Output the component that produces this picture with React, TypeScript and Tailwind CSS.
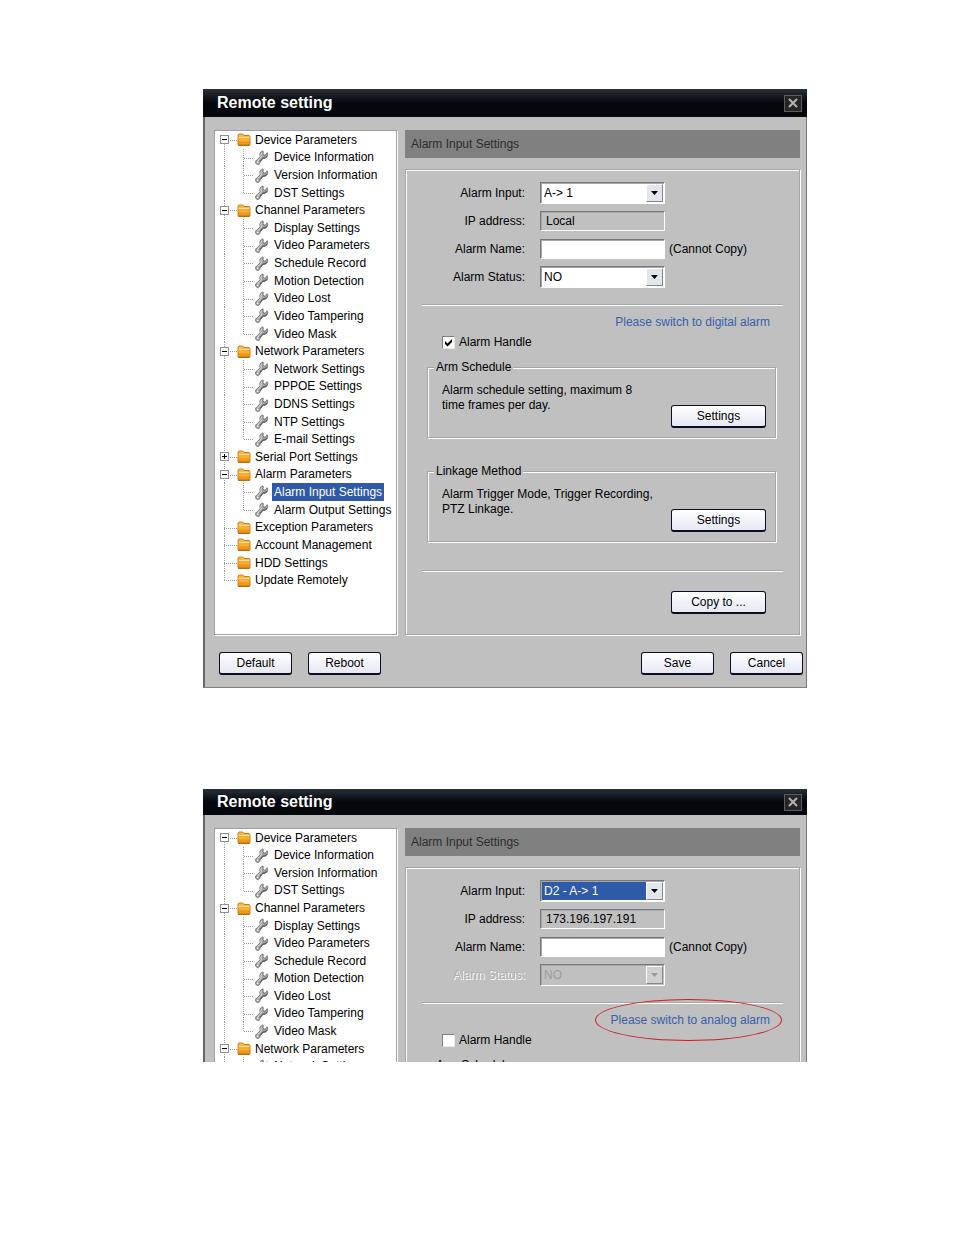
import clsx from 'clsx';
import { FC, ReactNode, useId } from 'react';

type TreeGroup = {
	name: string;
	open?: boolean;
	expandable?: boolean;
	children?: string[];
};

type RemoteSettingProps = {
	preview?: boolean;
	groups: TreeGroup[];
	selected?: string;
	alarmInput: string;
	highlightInput?: boolean;
	ipAddress: string;
	statusDisabled?: boolean;
	switchText: string;
	circled?: boolean;
	handled: boolean;
};

const deviceGroup: TreeGroup = {
	name: 'Device Parameters',
	expandable: true,
	open: true,
	children: ['Device Information', 'Version Information', 'DST Settings'],
};

const channelGroup: TreeGroup = {
	name: 'Channel Parameters',
	expandable: true,
	open: true,
	children: [
		'Display Settings',
		'Video Parameters',
		'Schedule Record',
		'Motion Detection',
		'Video Lost',
		'Video Tampering',
		'Video Mask',
	],
};

const allGroups: TreeGroup[] = [
	deviceGroup,
	channelGroup,
	{
		name: 'Network Parameters',
		expandable: true,
		open: true,
		children: ['Network Settings', 'PPPOE Settings', 'DDNS Settings', 'NTP Settings', 'E-mail Settings'],
	},
	{ name: 'Serial Port Settings', expandable: true },
	{
		name: 'Alarm Parameters',
		expandable: true,
		open: true,
		children: ['Alarm Input Settings', 'Alarm Output Settings'],
	},
	{ name: 'Exception Parameters' },
	{ name: 'Account Management' },
	{ name: 'HDD Settings' },
	{ name: 'Update Remotely' },
];

const previewGroups: TreeGroup[] = [
	deviceGroup,
	channelGroup,
	{ name: 'Network Parameters', expandable: true, open: true, children: ['Network Settings'] },
];

const FolderIcon: FC = () => (
	<svg viewBox="0 0 14 13" className="w-[14px] h-[13px] shrink-0" aria-hidden="true">
		<path d="M1 11.600V2l.9-1h4l1.200 1.500h5l.9.8v8.300l-.6.8H1.600z" fill="#f0981a" stroke="#c4740e" strokeWidth=".9" />
		<path d="M1.600 4V2.200l.6-.6h3.500l1.200 1.500h5.500V4z" fill="#f8b84a" />
		<path d="M1.500 4.600h11" stroke="#ffe29a" strokeWidth="1.200" />
		<path d="M1.600 5.400h10.800v3H1.600z" fill="#fbb034" />
		<path d="M1.200 12.200h11.400" stroke="#a85e08" strokeWidth=".9" />
	</svg>
);

const WrenchIcon: FC = () => (
	<svg viewBox="0 0 14 15" className="w-[14px] h-[15px] shrink-0" aria-hidden="true">
		<path
			d="M8 .9 5.600 2.200 4.800 4.400l.3 2.200L2.300 9.800l-1.500 1-.3 1.800.9 1.500 1.700.4 1.600-.9.6-1.800L8 8.500l2.200-.2 1.900-1.400.7-2.300-.7-1.900-1.500 2.200-1.600.2-1-1.200.3-1.700z"
			fill="#a2a2a2"
			stroke="#6a6a6a"
			strokeWidth=".8"
			strokeLinejoin="round"
		/>
		<path d="M6.700 2.600 5.900 4.500l.4 2.500-3.900 4.200" fill="none" stroke="#dedede" strokeWidth="1" />
		<path d="M4.900 11.600 7.700 8.100l2.400-.4 1.700-1.400" fill="none" stroke="#4a4a4a" strokeWidth=".9" />
		<circle cx="2.700" cy="12.400" r=".8" fill="#f4f4f4" />
	</svg>
);

const dots = { stroke: '#9a9a9a', strokeDasharray: '1 1' };

const RootLines: FC<{ first?: boolean; last?: boolean; branch?: boolean }> = ({ first, last, branch }) => (
	<svg className="col-start-1 row-start-1 w-[22px] h-full" aria-hidden="true">
		<line x1="9.5" x2="9.5" y1={first ? '50%' : '0'} y2={last ? '50%' : '100%'} {...dots} />
		{branch && <line x1="9" x2="22" y1="9.5" y2="9.5" {...dots} />}
	</svg>
);

const TreeLabel: FC<{ selected?: boolean; children: ReactNode }> = ({ selected, children }) => (
	<button
		type="button"
		className={clsx('ml-0.5 px-0.5 h-full flex items-center whitespace-nowrap', selected && 'bg-[#2f5aa8] text-white')}
	>
		{children}
	</button>
);

const Tree: FC<{ groups: TreeGroup[]; selected?: string; preview?: boolean }> = ({ groups, selected, preview }) => (
	<ul className={clsx('grid auto-rows-fr', preview ? 'h-[246px]' : 'h-[458px]')}>
		{groups.flatMap((group, i) => [
			<li key={group.name} className="flex items-center min-h-0">
				<span className="grid h-full items-center">
					<RootLines first={i === 0} last={!preview && i === groups.length - 1} branch />
					{group.expandable && (
						<button
							type="button"
							aria-label={group.open ? 'Collapse' : 'Expand'}
							className="col-start-1 row-start-1 ml-[5px] z-10 w-[9px] h-[9px] border border-[#8a9199] bg-white"
						>
							<svg viewBox="0 0 7 7" className="w-[7px] h-[7px]">
								<path d={group.open ? 'M1 3.5h5' : 'M1 3.5h5M3.5 1v5'} stroke="#000" />
							</svg>
						</button>
					)}
				</span>
				<FolderIcon />
				<TreeLabel>{group.name}</TreeLabel>
			</li>,
			...(group.children ?? []).map((child, j, all) => (
				<li key={child} className="flex items-center min-h-0">
					<span className="grid h-full">
						<RootLines />
					</span>
					<svg className="w-[18px] h-full shrink-0" aria-hidden="true">
						<line x1="6.5" x2="6.5" y1="0" y2={j === all.length - 1 ? '50%' : '100%'} {...dots} />
						<line x1="7" x2="17" y1="9.5" y2="9.5" {...dots} />
					</svg>
					<WrenchIcon />
					<span className="w-px" />
					<TreeLabel selected={child === selected}>{child}</TreeLabel>
				</li>
			)),
		])}
	</ul>
);

const PushButton: FC<{ wide?: boolean; children: ReactNode }> = ({ wide, children }) => (
	<button
		type="button"
		className={clsx(
			'h-[23px] shrink-0 rounded-[3px] border border-b-2 border-[#0a0e20] bg-linear-to-b from-white to-[#e6e8f4]',
			wide ? 'w-[95px]' : 'w-[73px]'
		)}
	>
		{children}
	</button>
);

const Divider: FC = () => <hr className="h-0.5 border-t border-b border-t-[#a6a6a6] border-b-white" />;

const FormRow: FC<{ id: string; label: string; disabled?: boolean; children: ReactNode }> = ({
	id,
	label,
	disabled,
	children,
}) => (
	<div className="flex items-center h-[22px]">
		<label
			htmlFor={id}
			className={clsx('w-[103px] mr-[15px] text-right', disabled && 'text-[#b0b0b0] [text-shadow:1px_1px_0_#fff]')}
		>
			{label}
		</label>
		{children}
	</div>
);

const fieldClass =
	'w-[125px] border border-t-[#777] border-l-[#777] border-r-white border-b-white shadow-[inset_1px_1px_0_#a8a8a8]';

const SelectBox: FC<{ id: string; value: string; highlight?: boolean; disabled?: boolean }> = ({
	id,
	value,
	highlight,
	disabled,
}) => (
	<div className={clsx(fieldClass, 'grid items-center h-[22px] p-px', disabled ? 'bg-[#c0c0c0]' : 'bg-white')}>
		<select
			id={id}
			disabled={disabled}
			className={clsx(
				'col-start-1 row-start-1 appearance-none w-full h-full pl-0.5 opacity-100 outline-none',
				highlight && 'bg-[#2f5aa8] text-white',
				disabled && 'text-[#9c9c9c]'
			)}
		>
			<option>{value}</option>
		</select>
		<span
			className={clsx(
				'col-start-1 row-start-1 justify-self-end pointer-events-none flex items-center justify-center w-[17px] h-full border border-t-white border-l-white border-r-[#858585] border-b-[#858585]',
				disabled ? 'bg-[#d0d0d0]' : 'bg-[#e4e6ee]'
			)}
		>
			<svg viewBox="0 0 7 4" className="w-[7px] h-[4px]">
				<path d="M0 0h7L3.5 4z" fill={disabled ? '#999' : '#000'} />
			</svg>
		</span>
	</div>
);

const Group: FC<{ title: string; className: string; children?: ReactNode }> = ({ title, className, children }) => (
	<fieldset
		className={clsx(
			'ml-[5px] mr-[7px] h-[78px] pl-3.5 pr-[9px] border border-[#a6a6a6] shadow-[1px_1px_0_#fff,inset_1px_1px_0_#fff]',
			className
		)}
	>
		<legend className="-ml-2 px-0.5 bg-[#c0c0c0] leading-[14px]">{title}</legend>
		{children && (
			<div className="flex items-end justify-between pt-[9px]">
				<p className="w-[216px] h-[45px] leading-[15px]">{children}</p>
				<PushButton wide>Settings</PushButton>
			</div>
		)}
	</fieldset>
);

const RemoteSetting: FC<RemoteSettingProps> = ({
	preview,
	groups,
	selected,
	alarmInput,
	highlightInput,
	ipAddress,
	statusDisabled,
	switchText,
	circled,
	handled,
}) => {
	const id = useId();

	return (
		<section className="bg-[#c0c0c0]">
			<header
				className={clsx(
					'flex items-center justify-between pl-3.5 pr-[5px] bg-linear-to-b from-[#2b313a] via-[#05070b] to-[#05080d]',
					preview ? 'h-[26px]' : 'h-7'
				)}
			>
				<h2 className="text-base leading-5 font-bold text-white">Remote setting</h2>
				<button
					type="button"
					aria-label="Close"
					className="flex items-center justify-center w-[18px] h-[17px] border border-[#5c5c5c] bg-[#262626]"
				>
					<svg viewBox="0 0 10 10" className="w-[10px] h-[10px]">
						<path d="M1 1l8 8M9 1L1 9" stroke="#b4b4b4" strokeWidth="2" />
					</svg>
				</button>
			</header>
			<div className="border-l-2 border-r border-b border-l-[#666] border-r-[#777] border-b-[#808080]">
				<div className="flex gap-2 pt-[13px] pl-[9px] pr-1.5">
					<nav className="w-[183px] shrink-0 border border-[#a0a0a0] bg-white shadow-[1px_1px_0_#fff]">
						<Tree groups={groups} selected={selected} preview={preview} />
					</nav>
					<div className="flex-1 min-w-0">
						<h3 className="h-7 pl-1.5 flex items-center bg-[#808080] text-[#2c2c2c]">Alarm Input Settings</h3>
						<form className="mt-[11px] pt-3 px-4 pb-5 border border-[#a6a6a6] shadow-[1px_1px_0_#fff,inset_1px_1px_0_#fff]">
							<div className="flex flex-col gap-1.5 mb-4">
								<FormRow id={`${id}-input`} label="Alarm Input:">
									<SelectBox id={`${id}-input`} value={alarmInput} highlight={highlightInput} />
								</FormRow>
								<FormRow id={`${id}-ip`} label="IP address:">
									<input id={`${id}-ip`} readOnly defaultValue={ipAddress} className={clsx(fieldClass, 'h-5 pl-[5px]')} />
								</FormRow>
								<FormRow id={`${id}-name`} label="Alarm Name:">
									<input id={`${id}-name`} className={clsx(fieldClass, 'h-5 px-1 bg-white')} />
									<span className="ml-1">(Cannot Copy)</span>
								</FormRow>
								<FormRow id={`${id}-status`} label="Alarm Status:" disabled={statusDisabled}>
									<SelectBox id={`${id}-status`} value="NO" disabled={statusDisabled} />
								</FormRow>
							</div>
							<Divider />
							<div className="flex justify-end mt-2 pr-[13px]">
								<a href="#" className="relative h-4 text-[#3560ac]">
									{switchText}
									{circled && (
										<span className="absolute -inset-y-[13px] -left-4 -right-3 rounded-[50%] border border-[#c8201c]" />
									)}
								</a>
							</div>
							<div className="flex items-center mt-1 ml-5 h-4">
								<span className="grid items-center">
									<input
										id={`${id}-handle`}
										type="checkbox"
										defaultChecked={handled}
										className="peer col-start-1 row-start-1 appearance-none w-[13px] h-[13px] bg-white border border-t-[#808080] border-l-[#808080] border-r-[#e8e8e8] border-b-[#e8e8e8]"
									/>
									<svg
										viewBox="0 0 13 13"
										className="col-start-1 row-start-1 w-[13px] h-[13px] pointer-events-none hidden peer-checked:block"
									>
										<path d="M3 5v3l2.500 2.500L10 6V3L5.500 7.500z" fill="#000" />
									</svg>
								</span>
								<label htmlFor={`${id}-handle`} className="ml-1">
									Alarm Handle
								</label>
							</div>
							{preview ? (
								<Group title="Arm Schedule" className="mt-2.5" />
							) : (
								<>
									<Group title="Arm Schedule" className="mt-2.5">
										Alarm schedule setting, maximum 8 time frames per day.
									</Group>
									<Group title="Linkage Method" className="mt-[26px] mb-7">
										Alarm Trigger Mode, Trigger Recording, PTZ Linkage.
									</Group>
									<Divider />
									<div className="flex justify-end mt-[19px] pr-[17px]">
										<PushButton wide>Copy to ...</PushButton>
									</div>
								</>
							)}
						</form>
					</div>
				</div>
				{!preview && (
					<footer className="flex gap-4 pt-[17px] pb-3 pl-3.5 pr-[3px]">
						<PushButton>Default</PushButton>
						<PushButton>Reboot</PushButton>
						<span className="flex-1" />
						<PushButton>Save</PushButton>
						<PushButton>Cancel</PushButton>
					</footer>
				)}
			</div>
		</section>
	);
};

export default function App() {
	return (
		<main className="min-h-screen bg-white pt-[89px] pl-[203px] pr-[147px] pb-40 font-['Liberation_Sans',Arial,sans-serif] text-xs text-black">
			<RemoteSetting
				groups={allGroups}
				selected="Alarm Input Settings"
				alarmInput="A-> 1"
				ipAddress="Local"
				switchText="Please switch to digital alarm"
				handled
			/>
			{/* only the top of the second dialog is shown */}
			<div className="mt-[101px] h-[273px] overflow-hidden">
				<RemoteSetting
					preview
					groups={previewGroups}
					alarmInput="D2 - A-> 1"
					highlightInput
					ipAddress="173.196.197.191"
					statusDisabled
					switchText="Please switch to analog alarm"
					circled
					handled={false}
				/>
			</div>
		</main>
	);
}
